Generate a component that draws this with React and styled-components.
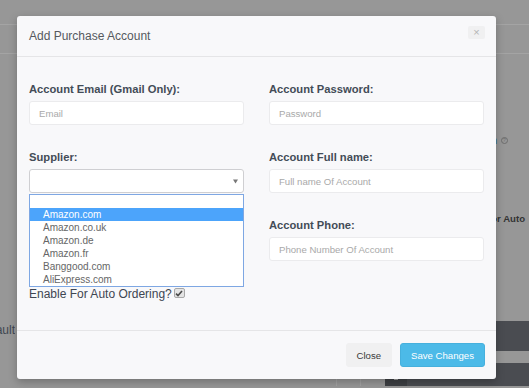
import styled, { createGlobalStyle } from 'styled-components';

const GlobalStyle = createGlobalStyle`
  html, body {
    margin: 0;
    padding: 0;
  }

  body {
    font-family: "Liberation Sans", Arial, sans-serif;
    background: #979797;
  }

  * {
    box-sizing: border-box;
  }
`;

const Screen = styled.div`
  position: relative;
  width: 529px;
  height: 388px;
  overflow: hidden;
  background: #979797;
`;

/* dimmed page behind the modal */

const BgBar = styled.div`
  height: ${ ({ h }) => h }px;
  border-bottom: 1px solid #a4a4a4;
`;

const BgBody = styled.div`
  display: grid;
  grid-template-columns: 385px 1fr;
  height: 332px;
`;

const BgMain = styled.div`
  display: flex;
  flex-direction: column;
  padding-top: 269px;
`;

const ClippedLabel = styled.div`
  display: flex;
  justify-content: flex-end;
  width: 15px;
  overflow: hidden;
  white-space: nowrap;
  font-size: 12px;
  line-height: 14px;
  color: #3f4751;
`;

const BgCells = styled.div`
  display: flex;
  margin-top: 41px;
  flex: 1;
`;

const BgCell = styled.div`
  width: ${ ({ w }) => w }px;
  border-right: 1px solid #a3a3a3;
`;

const BgSide = styled.div`
  display: flex;
  flex-direction: column;
  padding-top: 80px;
`;

const HelpRow = styled.div`
  display: flex;
  justify-content: flex-end;
  align-items: center;
  gap: 4px;
  padding-right: 21px;
  font-size: 11px;
  line-height: 12px;
  color: #2f5d8c;
`;

const HelpIcon = styled.span`
  width: 7px;
  height: 7px;
  border: 1px solid #6d6d6d;
  border-radius: 50%;
  font-size: 5px;
  line-height: 5px;
  text-align: center;
  color: #6d6d6d;
`;

const AutoRow = styled.div`
  margin-top: 66px;
  display: flex;
  justify-content: flex-end;
  padding-right: 4px;
  font-size: 9.6px;
  font-weight: bold;
  line-height: 14px;
  color: #333;
  white-space: nowrap;
`;

const DarkBlock = styled.div`
  margin-top: ${ ({ top }) => top }px;
  height: ${ ({ h }) => (h ? `${ h }px` : 'auto') };
  flex: ${ ({ h }) => (h ? 'none' : 1) };
  background: #4a4c51;
  display: flex;
  align-items: flex-end;
`;

const DarkKey = styled.div`
  width: 22px;
  height: 9px;
  background: #3e4044;
  display: flex;
  justify-content: center;
  align-items: flex-start;
  padding-top: 2px;

  &::before {
    content: '';
    width: 4px;
    height: 1px;
    background: #9a9a9a;
  }
`;

/* modal */

const Modal = styled.div`
  position: absolute;
  top: 16px;
  left: 17px;
  width: 479px;
  background: #f8f8fa;
  border-radius: 3px;
  box-shadow: 0 3px 9px rgba(0, 0, 0, 0.25);
`;

const Header = styled.div`
  height: 41px;
  display: flex;
  justify-content: space-between;
  align-items: center;
  padding: 0 11px 0 12px;
  border-bottom: 1px solid #e5e5e7;
`;

const Title = styled.h4`
  margin: 0;
  font-size: 12px;
  font-weight: normal;
  color: #55595e;
`;

const CloseX = styled.button`
  align-self: flex-start;
  margin-top: 10px;
  width: 17px;
  height: 13px;
  padding: 0;
  border: none;
  border-radius: 2px;
  background: #f0f0f1;
  color: #b5b5b5;
  font-family: "Liberation Sans", Arial, sans-serif;
  font-size: 11px;
  line-height: 13px;
`;

const Body = styled.div`
  padding: 24px 12px 29px;
`;

const FieldGrid = styled.div`
  display: grid;
  grid-template-columns: 215px 215px;
  column-gap: 25px;
  row-gap: 24px;
`;

const Field = styled.div`
  display: flex;
  flex-direction: column;
`;

const Label = styled.label`
  font-size: 11.2px;
  font-weight: bold;
  line-height: 16px;
  color: #434c57;
  margin-bottom: 4px;
`;

const TextInput = styled.input`
  height: 24px;
  width: 100%;
  padding: 0 9px;
  border: 1px solid #ebebed;
  border-radius: 3px;
  background: #fff;
  font-family: "Liberation Sans", Arial, sans-serif;
  font-size: 9.6px;
  color: #555;
  outline: none;

  &::placeholder {
    color: #a9a9a9;
  }
`;

const SelectWrap = styled.div`
  position: relative;
`;

const SelectBox = styled.div`
  height: 24px;
  border: 1px solid #cfcfd2;
  border-radius: 3px;
  background: #fff;
  display: flex;
  justify-content: flex-end;
  align-items: center;
  padding-right: 5px;
`;

const Options = styled.ul`
  position: absolute;
  top: calc(100% + 1px);
  left: 0;
  right: 0;
  margin: 0;
  padding: 0;
  list-style: none;
  background: #fff;
  border: 1px solid #7ea7e3;
  z-index: 2;
`;

const Option = styled.li`
  height: 13px;
  padding-left: 13px;
  font-size: 10px;
  line-height: 13px;
  color: ${ ({ selected }) => (selected ? '#fff' : '#666') };
  background: ${ ({ selected }) => (selected ? '#4ca4fb' : 'transparent') };
`;

const EnableRow = styled.div`
  margin-top: 26px;
  display: flex;
  align-items: flex-start;
  font-size: 12px;
  line-height: 14px;
  color: #3e4652;
`;

const CheckBox = styled.span`
  margin: 1px 0 0 2px;
  width: 11px;
  height: 10px;
  border: 1px solid #a8a8a8;
  border-radius: 2px;
  background: #e4e4e4;
  display: flex;
  justify-content: center;
  align-items: center;
`;

const Footer = styled.div`
  display: flex;
  justify-content: flex-end;
  gap: 8px;
  padding: 12px 11px;
  border-top: 1px solid #e5e5e7;
`;

const Button = styled.button`
  height: 24px;
  padding: 0 10px;
  border: 1px solid ${ ({ primary }) => (primary ? '#46b0dd' : '#f0f0f1') };
  border-radius: 3px;
  background: ${ ({ primary }) => (primary ? '#4cbae8' : '#f0f0f1') };
  color: ${ ({ primary }) => (primary ? '#fff' : '#3a3a3a') };
  font-family: "Liberation Sans", Arial, sans-serif;
  font-size: 9.6px;
`;

const suppliers = ['Amazon.com', 'Amazon.co.uk', 'Amazon.de', 'Amazon.fr', 'Banggood.com', 'AliExpress.com'];

export default function App() {
  return (
    <Screen>
      <GlobalStyle />

      <BgBar h={ 25 } />
      <BgBar h={ 29 } />
      <BgBody>
        <BgMain>
          <ClippedLabel><span>Use Default</span></ClippedLabel>
          <BgCells>
            <BgCell w={ 337 } />
            <BgCell w={ 24 } />
          </BgCells>
        </BgMain>
        <BgSide>
          <HelpRow>
            <span>Learn</span>
            <HelpIcon>?</HelpIcon>
          </HelpRow>
          <AutoRow>Enable For Auto</AutoRow>
          <DarkBlock top={ 95 } h={ 30 } />
          <DarkBlock top={ 12 }>
            <DarkKey />
          </DarkBlock>
        </BgSide>
      </BgBody>

      <Modal>
        <Header>
          <Title>Add Purchase Account</Title>
          <CloseX>×</CloseX>
        </Header>

        <Body>
          <FieldGrid>
            <Field>
              <Label>Account Email (Gmail Only):</Label>
              <TextInput placeholder="Email" />
            </Field>
            <Field>
              <Label>Account Password:</Label>
              <TextInput type="password" placeholder="Password" />
            </Field>
            <Field>
              <Label>Supplier:</Label>
              <SelectWrap>
                <SelectBox>
                  <svg width="5" height="5" viewBox="0 0 5 5">
                    <polygon points="0,0.5 5,0.5 2.5,4.5" fill="#777" />
                  </svg>
                </SelectBox>
                <Options>
                  <Option />
                  { suppliers.map((name, i) => (
                    <Option key={ name } selected={ i === 0 }>{name}</Option>
                  )) }
                </Options>
              </SelectWrap>
            </Field>
            <Field>
              <Label>Account Full name:</Label>
              <TextInput placeholder="Full name Of Account" />
            </Field>
            <div />
            <Field>
              <Label>Account Phone:</Label>
              <TextInput placeholder="Phone Number Of Account" />
            </Field>
          </FieldGrid>

          <EnableRow>
            Enable For Auto Ordering?
            <CheckBox>
              <svg width="8" height="7" viewBox="0 0 8 7">
                <path d="M1 3.6 L3 5.6 L7 1" stroke="#4a4a4a" strokeWidth="1.6" fill="none" />
              </svg>
            </CheckBox>
          </EnableRow>
        </Body>

        <Footer>
          <Button>Close</Button>
          <Button primary>Save Changes</Button>
        </Footer>
      </Modal>
    </Screen>
  );
}
